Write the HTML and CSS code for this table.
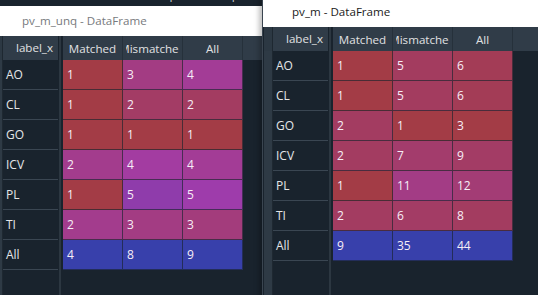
FILE: index.html
```html
<!DOCTYPE html>
<html>
<head>
<meta charset="utf-8">
<link rel="stylesheet" href="styles.css">
</head>
<body>
<div class="backdrop">Variable Explorer &nbsp; Help &nbsp; Plots &nbsp; Files</div>

<div class="win win-left">
  <div class="titlebar inactive">pv_m_unq - DataFrame</div>
  <div class="pane">
    <div class="lead"><div class="corner"></div><div class="strip"></div></div>
    <div class="index">
      <div class="ihead">label_x</div>
      <div class="icell">AO</div>
      <div class="icell">CL</div>
      <div class="icell">GO</div>
      <div class="icell">ICV</div>
      <div class="icell">PL</div>
      <div class="icell">TI</div>
      <div class="icell">All</div>
    </div>
    <div class="divider"></div>
    <div class="data">
      <div class="hrow"><div class="hcell"><span class="hclip">Matched</span></div><div class="hcell"><span class="hclip">Mismatched</span></div><div class="hcell"><span class="hclip">All</span></div></div>
      <div class="drow"><div class="cell" style="--h:356.4">1</div><div class="cell" style="--h:322.5">3</div><div class="cell" style="--h:311.9">4</div></div>
      <div class="drow"><div class="cell" style="--h:356.4">1</div><div class="cell" style="--h:339.4">2</div><div class="cell" style="--h:341.6">2</div></div>
      <div class="drow"><div class="cell" style="--h:356.4">1</div><div class="cell" style="--h:356.4">1</div><div class="cell" style="--h:356.4">1</div></div>
      <div class="drow"><div class="cell" style="--h:316.8">2</div><div class="cell" style="--h:305.5">4</div><div class="cell" style="--h:311.9">4</div></div>
      <div class="drow"><div class="cell" style="--h:356.4">1</div><div class="cell" style="--h:288.5">5</div><div class="cell" style="--h:297">5</div></div>
      <div class="drow"><div class="cell" style="--h:316.8">2</div><div class="cell" style="--h:322.5">3</div><div class="cell" style="--h:326.7">3</div></div>
      <div class="drow"><div class="cell" style="--h:237.6">4</div><div class="cell" style="--h:237.6">8</div><div class="cell" style="--h:237.6">9</div></div>
    </div>
  </div>
</div>

<div class="win win-right">
  <div class="titlebar">pv_m - DataFrame</div>
  <div class="pane">
    <div class="lead"><div class="corner"></div><div class="strip"></div></div>
    <div class="index">
      <div class="ihead">label_x</div>
      <div class="icell">AO</div>
      <div class="icell">CL</div>
      <div class="icell">GO</div>
      <div class="icell">ICV</div>
      <div class="icell">PL</div>
      <div class="icell">TI</div>
      <div class="icell">All</div>
    </div>
    <div class="divider"></div>
    <div class="data">
      <div class="hrow"><div class="hcell"><span class="hclip">Matched</span></div><div class="hcell"><span class="hclip">Mismatched</span></div><div class="hcell"><span class="hclip">All</span></div></div>
      <div class="drow"><div class="cell" style="--h:356.4">1</div><div class="cell" style="--h:342.4">5</div><div class="cell" style="--h:347.7">6</div></div>
      <div class="drow"><div class="cell" style="--h:356.4">1</div><div class="cell" style="--h:342.4">5</div><div class="cell" style="--h:347.7">6</div></div>
      <div class="drow"><div class="cell" style="--h:341.6">2</div><div class="cell" style="--h:356.4">1</div><div class="cell" style="--h:356.4">3</div></div>
      <div class="drow"><div class="cell" style="--h:341.6">2</div><div class="cell" style="--h:335.4">7</div><div class="cell" style="--h:339.0">9</div></div>
      <div class="drow"><div class="cell" style="--h:356.4">1</div><div class="cell" style="--h:321.5">11</div><div class="cell" style="--h:330.3">12</div></div>
      <div class="drow"><div class="cell" style="--h:341.6">2</div><div class="cell" style="--h:338.9">6</div><div class="cell" style="--h:341.9">8</div></div>
      <div class="drow"><div class="cell" style="--h:237.6">9</div><div class="cell" style="--h:237.6">35</div><div class="cell" style="--h:237.6">44</div></div>
    </div>
  </div>
</div>
</body>
</html>
```

FILE: styles.css
```css
* { box-sizing: border-box; }
html, body { margin: 0; padding: 0; }
body {
  width: 538px;
  height: 295px;
  overflow: hidden;
  position: relative;
  background: #19232d;
  font-family: "Open Sans", "Noto Sans", sans-serif;
  font-size: 12px;
  color: #e0e1e3;
}
.backdrop {
  position: absolute;
  left: 108px;
  top: -14px;
  white-space: nowrap;
  color: #c8ccd0;
  font-size: 12px;
}
.win {
  position: absolute;
  display: flex;
  flex-direction: column;
  background: #19232d;
  border-left: 1px solid #3a4550;
}
.win-left { left: -8px; top: 6px; width: 300px; height: 300px; }
.win-right {
  left: 262px;
  top: -3px;
  width: 290px;
  height: 310px;
  box-shadow: -3px 0 5px rgba(0, 0, 0, 0.25);
}
.titlebar {
  height: 30px;
  flex: none;
  background: #ffffff;
  color: #1b1b1b;
  padding-left: 29px;
  line-height: 30px;
  font-size: 11.6px;
  white-space: nowrap;
}
.titlebar.inactive { color: #777a7d; }
.pane { flex: 1; display: flex; }
.lead {
  width: 10px;
  flex: none;
  display: flex;
  flex-direction: column;
  padding-left: 1px;
  border-right: 1px solid #1e2831;
}
.corner { height: 24px; background: #2c3843; }
.strip { flex: 1; background: #2e3a45; }
.index { width: 55px; flex: none; }
.ihead {
  height: 24px;
  background: #303c48;
  text-align: right;
  padding-right: 5px;
  line-height: 24px;
  font-size: 11.6px;
  white-space: nowrap;
}
.icell {
  height: 30px;
  border-bottom: 1px solid #3a4652;
  padding-left: 3px;
  line-height: 29px;
  color: #e4e6e8;
}
.divider {
  width: 5px;
  flex: none;
  background: linear-gradient(to right, #19232d 1px, #2c3741 1px, #2c3741 3px, #19232d 3px);
}
.data { flex: 1; }
.hrow {
  height: 24px;
  display: flex;
  background: #303c48;
}
.hcell {
  width: 60px;
  flex: none;
  display: flex;
  padding: 0 3px;
  border-right: 1px solid #26313b;
  font-size: 11.6px;
}
.hclip {
  flex: 1;
  display: flex;
  justify-content: center;
  align-items: center;
  overflow: hidden;
  white-space: nowrap;
}
.drow { display: flex; }
.cell {
  width: 60px;
  height: 30px;
  flex: none;
  padding-left: 4px;
  line-height: 29px;
  color: #f6eef6;
  background: hsla(var(--h), 100%, 65%, 0.6);
  border-right: 1px solid rgba(25, 35, 45, 0.65);
  border-bottom: 1px solid rgba(25, 35, 45, 0.65);
}
```
